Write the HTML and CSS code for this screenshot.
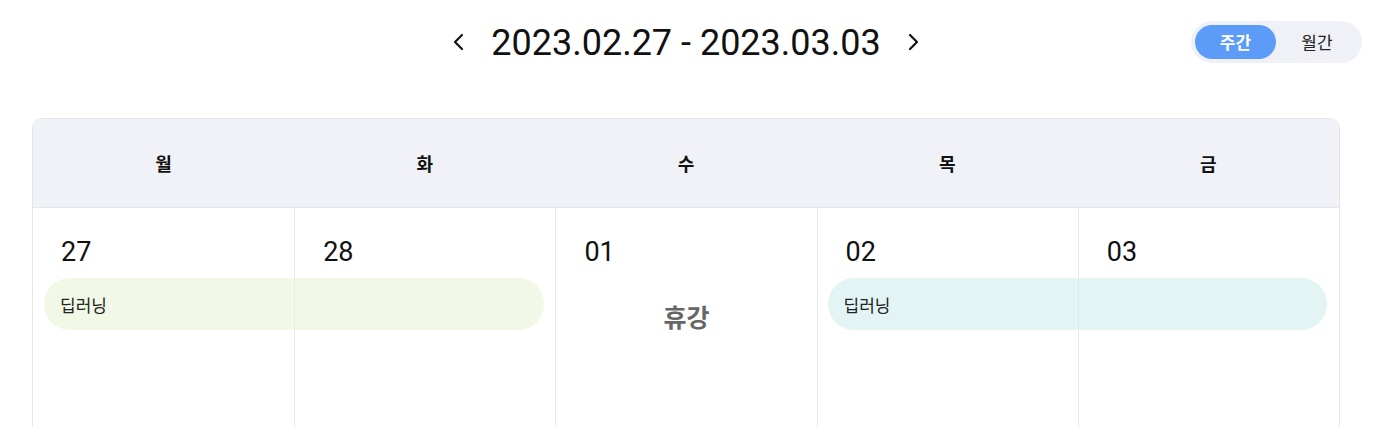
FILE: index.html
```html
<!DOCTYPE html>
<html lang="ko">
<head>
<meta charset="utf-8">
<link rel="stylesheet" href="styles.css">
</head>
<body>
<div class="top">
  <div class="spacer"></div>
  <div class="nav">
    <button class="arrow" aria-label="prev"><svg width="14" height="18" viewBox="0 0 14 18"><path d="M10 2 L3 9 L10 16" fill="none" stroke="#111" stroke-width="2.2" stroke-linecap="round" stroke-linejoin="round"/></svg></button>
    <span class="range">2023.02.27 - 2023.03.03</span>
    <button class="arrow" aria-label="next"><svg width="14" height="18" viewBox="0 0 14 18"><path d="M4 2 L11 9 L4 16" fill="none" stroke="#111" stroke-width="2.2" stroke-linecap="round" stroke-linejoin="round"/></svg></button>
  </div>
  <div class="toggle">
    <span class="opt active">주간</span>
    <span class="opt">월간</span>
  </div>
</div>
<div class="cal">
  <div class="head">
    <div class="dn">월</div><div class="dn">화</div><div class="dn">수</div><div class="dn">목</div><div class="dn">금</div>
  </div>
  <div class="body">
    <div class="cell"><div class="num">27</div><div class="event green">딥러닝</div></div>
    <div class="cell"><div class="num">28</div></div>
    <div class="cell"><div class="num">01</div><div class="off">휴강</div></div>
    <div class="cell"><div class="num">02</div><div class="event blue">딥러닝</div></div>
    <div class="cell"><div class="num">03</div></div>
  </div>
</div>
</body>
</html>
```
FILE: styles.css
```css
* { box-sizing: border-box; }
body {
  margin: 0;
  font-family: Roboto, "Noto Sans CJK KR", sans-serif;
  color: #111;
  background: #fff;
  overflow: hidden;
}
.top {
  display: grid;
  grid-template-columns: 1fr auto 1fr;
  align-items: center;
  height: 84px;
  padding-right: 10px;
}
.nav {
  display: flex;
  align-items: center;
  gap: 24px;
}
.arrow {
  border: 0;
  background: none;
  padding: 0;
  width: 16px;
  height: 24px;
  display: flex;
  align-items: center;
  justify-content: center;
}
.range {
  font-size: 36px;
  line-height: 40px;
  margin-top: 1px;
}
.toggle {
  justify-self: end;
  display: flex;
  background: #f0f1f6;
  border-radius: 21px;
  padding: 4px;
  height: 42px;
  margin-top: -1px;
  margin-right: 10px;
}
.opt {
  width: 82px;
  height: 34px;
  border-radius: 17px;
  display: flex;
  align-items: center;
  justify-content: center;
  font-family: "Noto Sans CJK KR", sans-serif;
  font-size: 17px;
  color: #222;
}
.opt.active {
  width: 81px;
  background: #5c9cf8;
  color: #fff;
  font-weight: 700;
}
.cal {
  margin: 34px 0 0 32px;
  width: 1308px;
  height: 320px;
  border: 1px solid #e4e6ee;
  border-radius: 10px;
  overflow: hidden;
}
.head {
  display: grid;
  grid-template-columns: repeat(5, 1fr);
  height: 89px;
  background: #f0f2f7;
  border-bottom: 1px solid #e4e6ee;
}
.dn {
  display: flex;
  align-items: center;
  justify-content: center;
  font-family: "Noto Sans CJK KR", sans-serif;
  font-size: 18px;
  font-weight: 700;
  color: #111;
}
.body {
  display: grid;
  grid-template-columns: repeat(5, 1fr);
  height: 230px;
}
.cell {
  position: relative;
  padding: 29px 28px;
  border-left: 1px solid #e6e8ee;
}
.cell:first-child { border-left: 0; }
.num {
  font-size: 27px;
  line-height: 30px;
  color: #111;
}
.event {
  position: absolute;
  top: 70px;
  left: 11px;
  width: calc(200% - 21px);
  height: 52px;
  border-radius: 26px;
  padding-left: 16px;
  display: flex;
  align-items: center;
  font-family: "Noto Sans CJK KR", sans-serif;
  font-size: 17px;
  color: #222;
  z-index: 1;
}
.cell:first-child .event { left: 11px; width: calc(200% - 22px); }
.cell:nth-child(4) .event { left: 10px; }
.green { background: rgba(227, 241, 205, 0.5); }
.blue { background: rgba(199, 233, 233, 0.5); }
.off {
  margin-top: 31px;
  text-align: center;
  font-family: "Noto Sans CJK KR", sans-serif;
  font-size: 25px;
  font-weight: 700;
  line-height: 36px;
  color: #666;
}
```
